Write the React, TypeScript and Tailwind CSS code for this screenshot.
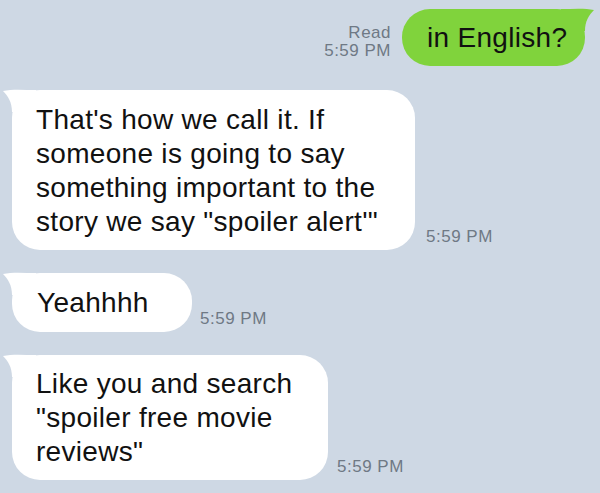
import React from "react";

type Side = "left" | "right";

function Tail({ side, color }: { side: Side; color: string }) {
    if (side === "left") {
        return (
            <svg className="absolute -left-[10px] -top-[2px]" width="40" height="30" viewBox="0 0 40 30">
                <path d="M34 2 C22 2, 10 1, 1 3 C6 8, 10 14, 10 24 L34 24 Z" fill={color} />
            </svg>
        );
    }
    return (
        <svg className="absolute -right-[10px] -top-[2px]" width="40" height="30" viewBox="0 0 40 30">
            <path d="M6 2 C18 2, 30 1, 39 3 C34 8, 30 14, 30 24 L6 24 Z" fill={color} />
        </svg>
    );
}

function Time({ children }: { children: React.ReactNode }) {
    return (
        <span className="text-[17px] leading-[20px] tracking-[0.5px] text-[#6f7985] mb-[3px] whitespace-nowrap">
            {children}
        </span>
    );
}

export default function App() {
    return (
        <div
            className="w-[600px] h-[493px] bg-[#ced8e4] flex flex-col pt-[9px] overflow-hidden"
            style={{ fontFamily: '"Liberation Sans", Arial, sans-serif' }}
        >
            {/* outgoing */}
            <div className="flex justify-end items-end gap-[11px] pr-[15px]">
                <div className="flex flex-col items-end text-[17px] leading-[18px] tracking-[0.5px] text-[#6f7985] mb-[6px]">
                    <span>Read</span>
                    <span>5:59 PM</span>
                </div>
                <div className="relative w-[183px] bg-[#80d33c] rounded-[28px] pl-[25px] pt-[12px] pb-[11px] text-[28px] leading-[34px] tracking-[0.3px] text-[#111] whitespace-nowrap">
                    <Tail side="right" color="#80d33c" />
                    <span className="relative">in English?</span>
                </div>
            </div>

            <div className="flex items-end gap-[11px] pl-[12px] mt-[24px]">
                <div className="relative w-[403px] bg-white rounded-[28px] pl-[24px] pt-[13px] pb-[11px] text-[28px] leading-[34px] tracking-[0.3px] text-[#111] whitespace-nowrap">
                    <Tail side="left" color="#ffffff" />
                    <p className="relative">
                        That's how we call it. If
                        <br />
                        someone is going to say
                        <br />
                        something important to the
                        <br />
                        story we say "spoiler alert'"
                    </p>
                </div>
                <Time>5:59 PM</Time>
            </div>

            <div className="flex items-end gap-[8px] pl-[12px] mt-[23px]">
                <div className="relative w-[180px] bg-white rounded-[28px] pl-[25px] pt-[13px] pb-[12px] text-[28px] leading-[34px] tracking-[0.3px] text-[#111] whitespace-nowrap">
                    <Tail side="left" color="#ffffff" />
                    <span className="relative">Yeahhhh</span>
                </div>
                <Time>5:59 PM</Time>
            </div>

            <div className="flex items-end gap-[9px] pl-[12px] mt-[23px]">
                <div className="relative w-[316px] bg-white rounded-[28px] pl-[24px] pt-[12px] pb-[11px] text-[28px] leading-[34px] tracking-[0.3px] text-[#111] whitespace-nowrap">
                    <Tail side="left" color="#ffffff" />
                    <p className="relative">
                        Like you and search
                        <br />
                        "spoiler free movie
                        <br />
                        reviews"
                    </p>
                </div>
                <Time>5:59 PM</Time>
            </div>
        </div>
    );
}
